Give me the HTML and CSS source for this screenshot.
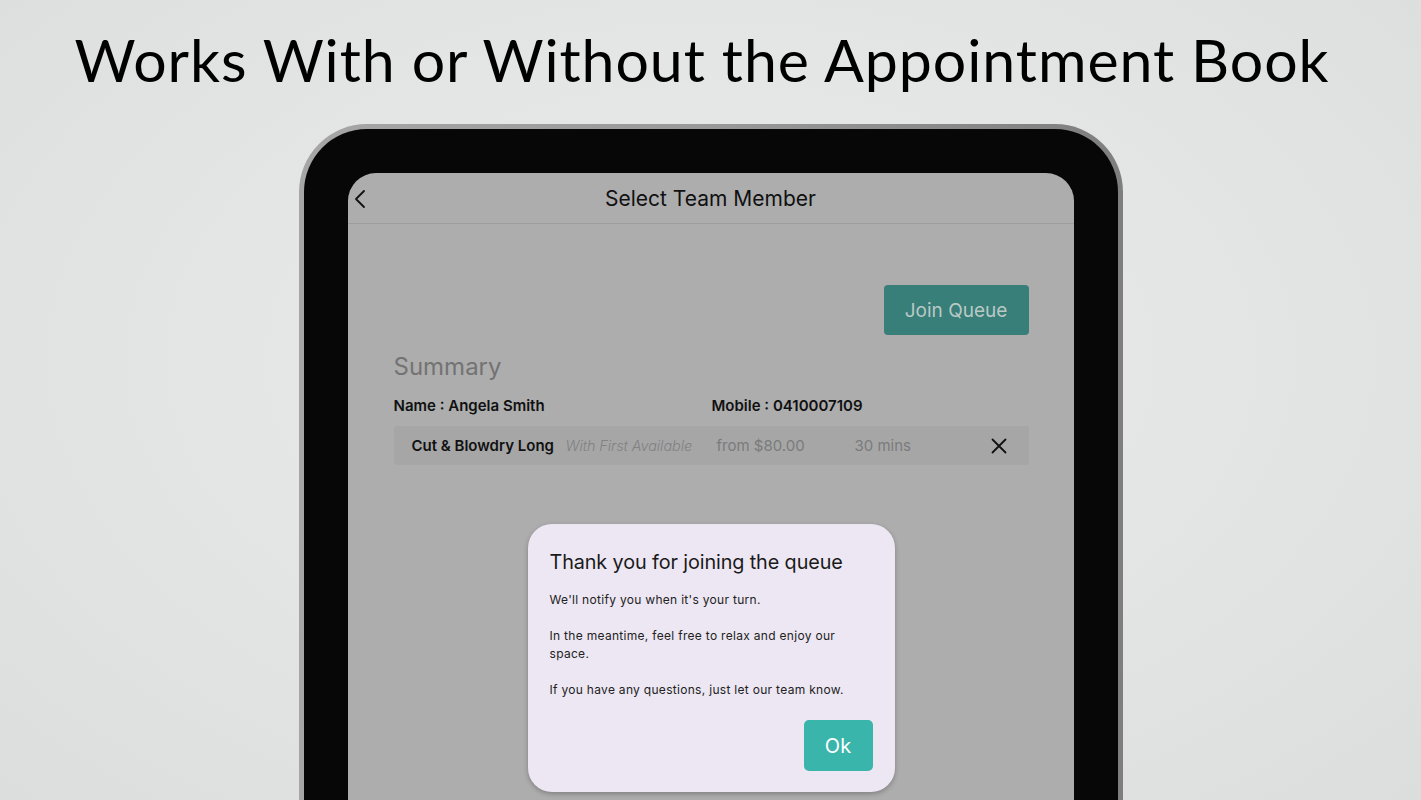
FILE: index.html
```html
<!DOCTYPE html>
<html>
<head>
<meta charset="utf-8">
<link rel="stylesheet" href="styles.css">
</head>
<body>
<div class="page">
  <h1 class="title">Works With or Without the Appointment Book</h1>
  <div class="device">
    <div class="bezel">
      <div class="screen">
        <div class="topbar">
          <svg class="back" width="14" height="20" viewBox="0 0 14 20"><path d="M11 2 L3 10 L11 18" fill="none" stroke="#111" stroke-width="1.8" stroke-linecap="round" stroke-linejoin="round"/></svg>
          <div class="topbar-title">Select Team Member</div>
        </div>
        <div class="content">
          <div class="actions"><button class="join">Join Queue</button></div>
          <div class="summary">Summary</div>
          <div class="info">
            <div class="info-name">Name : Angela Smith</div>
            <div class="info-mobile">Mobile : 0410007109</div>
          </div>
          <div class="service">
            <span class="svc-name">Cut &amp; Blowdry Long</span>
            <span class="svc-with">With First Available</span>
            <span class="svc-price">from $80.00</span>
            <span class="svc-time">30 mins</span>
            <svg class="svc-x" width="16" height="16" viewBox="0 0 16 16"><path d="M1.5 1.5 L14.5 14.5 M14.5 1.5 L1.5 14.5" stroke="#111" stroke-width="1.8" stroke-linecap="round"/></svg>
          </div>
        </div>
        <div class="dialog">
          <div class="dlg-title">Thank you for joining the queue</div>
          <p class="dlg-text">We'll notify you when it's your turn.</p>
          <p class="dlg-text">In the meantime, feel free to relax and enjoy our space.</p>
          <p class="dlg-text">If you have any questions, just let our team know.</p>
          <div class="dlg-actions"><button class="ok">Ok</button></div>
        </div>
      </div>
    </div>
  </div>
</div>
</body>
</html>
```
FILE: styles.css
```css
* { box-sizing: border-box; }
html, body { margin: 0; padding: 0; }
body {
  width: 1421px;
  height: 800px;
  overflow: hidden;
  background: radial-gradient(ellipse at 50% 45%, #e9eaea 0%, #e4e5e5 50%, #dcdddd 100%);
  font-family: Inter, "Noto Sans", sans-serif;
}
.page {
  display: flex;
  flex-direction: column;
  align-items: center;
}
.title {
  margin: 24px 17px 0 0;
  height: 100px;
  font-family: Lato, "Open Sans", sans-serif;
  font-weight: 400;
  font-size: 59px;
  line-height: 72px;
  letter-spacing: 0.95px;
  color: #000;
  white-space: nowrap;
}
.device {
  width: 824px;
  height: 676px;
  padding: 5px 5px 0 5px;
  border-radius: 68px 68px 0 0;
  background: linear-gradient(90deg, #a6a6a6 0%, #999 50%, #7e7e7e 100%);
}
.bezel {
  height: 100%;
  padding: 44px 44px 0 44px;
  border-radius: 63px 63px 0 0;
  background: #070707;
}
.screen {
  position: relative;
  height: 100%;
  background: #adadae;
  border-radius: 28px 28px 0 0;
  overflow: hidden;
}
.topbar {
  height: 51px;
  display: flex;
  align-items: center;
  justify-content: center;
  position: relative;
  border-bottom: 1px solid #9d9d9e;
}
.back {
  position: absolute;
  left: 5px;
  top: 16px;
}
.topbar-title {
  font-size: 21px;
  color: #111;
  padding-top: 1px;
}
.content {
  padding: 61px 45px 0 46px;
}
.actions {
  display: flex;
  justify-content: flex-end;
}
.join {
  width: 145px;
  height: 50px;
  border: none;
  border-radius: 4px;
  background: #387e79;
  color: #b9c9c6;
  font-family: Inter, sans-serif;
  font-size: 19px;
  padding: 0;
}
.summary {
  margin-top: 17px;
  font-size: 24px;
  color: #737373;
  line-height: 30px;
}
.info {
  display: flex;
  margin-top: 14px;
  font-size: 15px;
  font-weight: 600;
  color: #111;
  line-height: 20px;
}
.info-name { width: 318px; }
.service {
  margin-top: 10px;
  height: 39px;
  background: #a6a6a7;
  border-radius: 3px;
  display: flex;
  align-items: center;
  padding-left: 18px;
  font-size: 15px;
  position: relative;
}
.svc-name { font-weight: 600; color: #111; width: 154px; }
.svc-with { font-style: italic; font-weight: 300; font-size: 14.5px; letter-spacing: -0.1px; color: #828282; width: 151px; }
.svc-price { color: #7b7b7b; width: 138px; }
.svc-time { color: #7b7b7b; }
.svc-x { position: absolute; left: 597px; top: 12px; }
.dialog {
  position: absolute;
  left: 180px;
  top: 351px;
  width: 367px;
  height: 268px;
  background: #ede7f3;
  border-radius: 24px;
  padding: 24px 22px 0 22px;
  box-shadow: 0 2px 5px rgba(0,0,0,0.25);
}
.dlg-title {
  font-size: 19.8px;
  letter-spacing: -0.1px;
  color: #1a1a1a;
  line-height: 28px;
}
.dlg-text {
  margin: 0 0 18px 0;
  font-size: 12px;
  letter-spacing: 0.3px;
  line-height: 18px;
  color: #222;
}
.dlg-title + .dlg-text { margin-top: 15px; }
.dlg-actions {
  display: flex;
  justify-content: flex-end;
  margin-top: 21px;
}
.ok {
  width: 69px;
  height: 51px;
  border: none;
  border-radius: 5px;
  background: #3ab5ab;
  color: #fff;
  font-family: Inter, sans-serif;
  font-size: 20px;
  padding: 0;
}
```
